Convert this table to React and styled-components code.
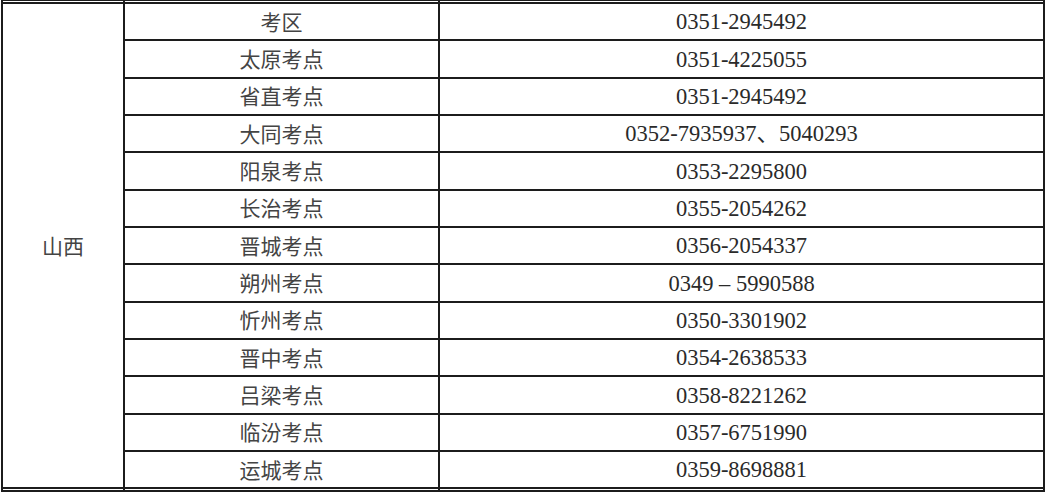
import styled, { createGlobalStyle } from "styled-components";

const GlobalStyle = createGlobalStyle`
  html, body {
    margin: 0;
    padding: 0;
    background: #fff;
    overflow: hidden;
  }
`;

// 山西 考点 联系电话
const sites = [
  { name: "考区", phone: "0351-2945492" },
  { name: "太原考点", phone: "0351-4225055" },
  { name: "省直考点", phone: "0351-2945492" },
  { name: "大同考点", phone: "0352-7935937、5040293" },
  { name: "阳泉考点", phone: "0353-2295800" },
  { name: "长治考点", phone: "0355-2054262" },
  { name: "晋城考点", phone: "0356-2054337" },
  { name: "朔州考点", phone: "0349 – 5990588" },
  { name: "忻州考点", phone: "0350-3301902" },
  { name: "晋中考点", phone: "0354-2638533" },
  { name: "吕梁考点", phone: "0358-8221262" },
  { name: "临汾考点", phone: "0357-6751990" },
  { name: "运城考点", phone: "0359-8698881" },
];

const App = () => {
  return (
    <>
      <GlobalStyle />
      <Page>
        <Sheet>
          <colgroup>
            <col style={{ width: 122 }} />
            <col style={{ width: 315 }} />
            <col style={{ width: 605 }} />
          </colgroup>
          <tbody>
            {/* 위쪽 잘린 행 */}
            <EdgeRow $h={3}>
              <Cell />
              <Cell />
              <Cell />
            </EdgeRow>
            {sites.map((s, i) => (
              <Row key={s.name}>
                {i === 0 && (
                  <Cell rowSpan={sites.length}>
                    <Cjk>山西</Cjk>
                  </Cell>
                )}
                <Cell>
                  <Cjk>{s.name}</Cjk>
                </Cell>
                <Cell>
                  <Phone>{s.phone}</Phone>
                </Cell>
              </Row>
            ))}
            {/* 아래쪽 잘린 행 */}
            <EdgeRow $h={3}>
              <Cell />
              <Cell />
              <Cell />
            </EdgeRow>
          </tbody>
        </Sheet>
      </Page>
    </>
  );
};

const Page = styled.div`
  width: 1047px;
  height: 492px;
  overflow: hidden;
  padding-left: 1px;
  box-sizing: border-box;
`;

const Sheet = styled.table`
  border-collapse: collapse;
  table-layout: fixed;
  width: 1043px;
  margin-top: -1px;
`;

const Row = styled.tr`
  height: 37.33px;
`;

const EdgeRow = styled.tr`
  height: ${(p) => p.$h}px;

  td {
    padding: 0;
  }
`;

const Cell = styled.td`
  border: 2px solid #1c1c1c;
  padding: 0;
  text-align: center;
  vertical-align: middle;
  line-height: 1;
`;

const Cjk = styled.span`
  font-family: "Noto Sans CJK SC", sans-serif;
  font-size: 21px;
  color: #444;
`;

const Phone = styled.span`
  display: inline-block;
  padding-top: 2px;
  font-family: "Liberation Serif", "Noto Sans CJK SC", serif;
  font-size: 22.5px;
  color: #2a2a2a;
`;

export default App;
